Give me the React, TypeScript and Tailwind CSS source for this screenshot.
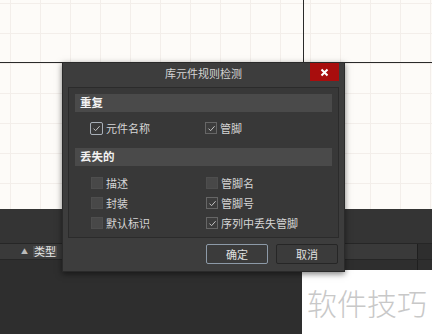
import React from 'react'

const font = { fontFamily: '"Noto Sans CJK SC", "Noto Sans", sans-serif' }

function Box({ checked, focus }: { checked?: boolean; focus?: boolean }) {
  if (focus) {
    return (
      <span className="flex h-[13px] w-[13px] items-center justify-center rounded-[2px] border border-[#a9b0b8] bg-[#3a3a3a]">
        <Tick />
      </span>
    )
  }
  if (checked) {
    return (
      <span className="flex h-[12px] w-[12px] items-center justify-center border border-[#666666] bg-[#3c3c3c]">
        <Tick />
      </span>
    )
  }
  return <span className="block h-[12px] w-[12px] border border-[#4e4e4e] bg-[#484848]" />
}

function Tick() {
  return (
    <svg width="9" height="9" viewBox="0 0 9 9">
      <path d="M1.5 4.6 L3.6 6.7 L7.6 2.2" fill="none" stroke="#c2c2c2" strokeWidth="1" />
    </svg>
  )
}

function Item({ label, checked, focus }: { label: string; checked?: boolean; focus?: boolean }) {
  return (
    <div className="flex h-[20px] items-center gap-[3px]">
      <Box checked={checked} focus={focus} />
      <span className="text-[11px] leading-none text-[#d6d6d6]">{label}</span>
    </div>
  )
}

function Section({ title }: { title: string }) {
  return (
    <div className="flex h-[18px] items-center bg-[#4a4a4a] pl-[5px] text-[11.5px] font-bold leading-none text-[#f2f2f2]">
      {title}
    </div>
  )
}

export default function App() {
  return (
    <div className="relative flex h-[334px] w-[432px] flex-col overflow-hidden bg-[#2e2e2e]" style={font}>
      {/* schematic sheet */}
      <div className="relative h-[209px] shrink-0 bg-[#fdfbf8] bg-[linear-gradient(to_right,#f3eeea_1px,transparent_1px),linear-gradient(to_bottom,#f3eeea_1px,transparent_1px)] bg-[length:30px_30px] bg-[position:10px_3px]">
        <div className="absolute left-[303px] top-0 h-[62px] w-px bg-[#2a2a2a]" />
        <div className="absolute left-0 top-[62px] h-px w-full bg-[#2a2a2a]" />
      </div>

      {/* lower panel */}
      <div className="h-[34px] shrink-0 bg-[#343434]" />
      <div className="flex h-[17px] shrink-0 border-y border-[#262626] bg-[#3a3a3a]">
        <div className="flex flex-1 items-center pl-[21px]">
          <span className="text-[7px] leading-none text-[#bbbbbb]">▲</span>
          <span className="ml-[5px] bg-[#4d4d4d] px-[1px] text-[11px] leading-none text-[#e6e6e6]">类型</span>
        </div>
        <div className="w-[15px] border-l border-[#1f1f1f] bg-[#2e2e2e]" />
      </div>
      <div className="flex flex-1">
        <div className="flex-1" />
        <div className="h-[10px] w-[15px] border-l border-[#1f1f1f]" />
      </div>

      {/* watermark */}
      <div className="absolute left-[302px] top-[270px] flex h-[64px] w-[130px] items-center justify-center bg-white">
        <span className="text-[30px] font-light leading-none text-[#c8c8c8]">软件技巧</span>
      </div>

      {/* dialog */}
      <div className="absolute left-[62px] top-[62px] flex h-[210px] w-[283px] flex-col border border-[#2a2a2a] bg-[#3d3d3d] shadow-[0_2px_6px_rgba(0,0,0,0.5)]">
        <div className="relative flex h-[20px] shrink-0 items-center justify-center">
          <span className="text-[11px] leading-none text-[#d4d4d4]">库元件规则检测</span>
          <div className="absolute right-[5px] top-0 flex h-[18px] w-[29px] items-center justify-center bg-[#a80d0d]">
            <svg width="9" height="9" viewBox="0 0 9 9">
              <path d="M1.5 1.5 L7.5 7.5 M7.5 1.5 L1.5 7.5" stroke="#ffffff" strokeWidth="2" />
            </svg>
          </div>
        </div>

        <div className="mx-[5px] mt-[4px] flex h-[151px] flex-col border border-[#2b2b2b] bg-[#383838] px-[6px] pt-[6px]">
          <Section title="重复" />
          <div className="mt-[6px] grid grid-cols-[115px_1fr] pl-[15px]">
            <Item label="元件名称" focus />
            <Item label="管脚" checked />
          </div>
          <div className="mt-[10px]">
            <Section title="丢失的" />
          </div>
          <div className="mt-[7px] grid grid-cols-[115px_1fr] pl-[16px]">
            <Item label="描述" />
            <Item label="管脚名" />
            <Item label="封装" />
            <Item label="管脚号" checked />
            <Item label="默认标识" />
            <Item label="序列中丢失管脚" checked />
          </div>
        </div>

        <div className="mt-[6px] flex justify-end gap-[8px] pr-[6px]">
          <button className="flex h-[20px] w-[62px] items-center justify-center rounded-[2px] border border-[#8d9aa8] bg-[#3b3b3b] text-[11px] leading-none text-[#e0e0e0]">
            确定
          </button>
          <button className="flex h-[20px] w-[62px] items-center justify-center rounded-[2px] border border-[#262626] bg-[#3b3b3b] text-[11px] leading-none text-[#e0e0e0]">
            取消
          </button>
        </div>
      </div>
    </div>
  )
}
